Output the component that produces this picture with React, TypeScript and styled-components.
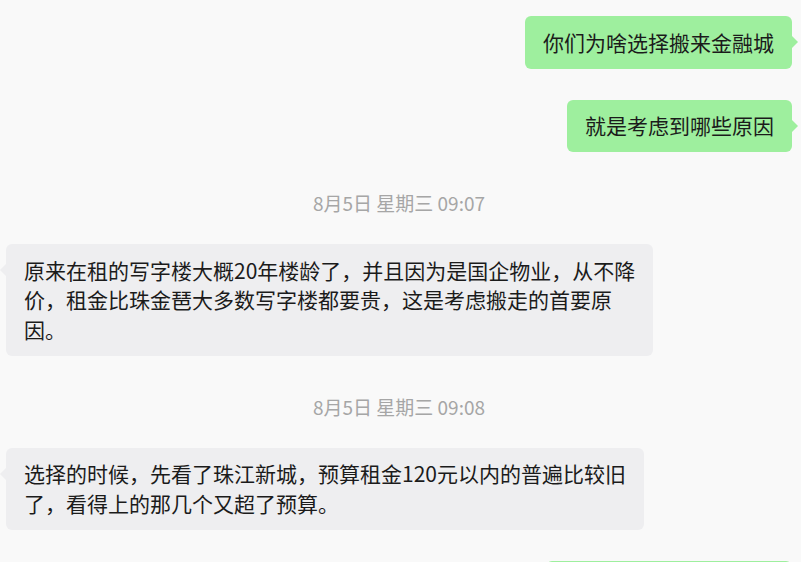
import React from "react";
import styled, { createGlobalStyle, css } from "styled-components";

const GlobalStyle = createGlobalStyle`
  html, body {
    margin: 0;
    padding: 0;
    background: #f9f9f9;
  }
  body {
    font-family: "Noto Sans CJK SC", "Noto Sans", sans-serif;
    overflow: hidden;
  }
`;

const Chat = styled.div`
  display: flex;
  flex-direction: column;
  gap: 31px;
  padding: 16px 9px 0 6px;
  box-sizing: border-box;
  width: 801px;
`;

const Row = styled.div<{ $mine?: boolean }>`
  display: flex;
  justify-content: ${(p) => (p.$mine ? "flex-end" : "flex-start")};
`;

const Bubble = styled.div<{ $mine?: boolean }>`
  position: relative;
  box-sizing: border-box;
  width: max-content;
  max-width: 649px;
  padding: 11.5px 18px;
  border-radius: 6px;
  font-size: 21px;
  line-height: 29.5px;
  color: #1b1b1b;
  background: ${(p) => (p.$mine ? "#9eef9e" : "#eeeef0")};

  &::after {
    content: "";
    position: absolute;
    top: 20px;
    width: 0;
    height: 0;
    border-top: 6.5px solid transparent;
    border-bottom: 6.5px solid transparent;
    ${(p) =>
      p.$mine
        ? css`
            right: -6px;
            border-left: 6px solid #9eef9e;
          `
        : css`
            left: -6px;
            border-right: 6px solid #eeeef0;
          `}
  }
`;

const Line = styled.span`
  display: block;
  white-space: nowrap;
`;

const Timestamp = styled.div`
  text-align: center;
  font-size: 19px;
  line-height: 20px;
  padding-top: 10px;
  color: #a6a6a6;
`;

type Item =
  | { kind: "msg"; mine: boolean; lines: string[] }
  | { kind: "time"; text: string };

const items: Item[] = [
  { kind: "msg", mine: true, lines: ["你们为啥选择搬来金融城"] },
  { kind: "msg", mine: true, lines: ["就是考虑到哪些原因"] },
  { kind: "time", text: "8月5日 星期三 09:07" },
  {
    kind: "msg",
    mine: false,
    lines: [
      "原来在租的写字楼大概20年楼龄了，并且因为是国企物业，从不降",
      "价，租金比珠金琶大多数写字楼都要贵，这是考虑搬走的首要原",
      "因。",
    ],
  },
  { kind: "time", text: "8月5日 星期三 09:08" },
  {
    kind: "msg",
    mine: false,
    lines: [
      "选择的时候，先看了珠江新城，预算租金120元以内的普遍比较旧",
      "了，看得上的那几个又超了预算。",
    ],
  },
  { kind: "msg", mine: true, lines: ["所以最后选择了金融城"] },
];

export default function App() {
  return (
    <>
      <GlobalStyle />
      <Chat>
        {items.map((it, i) =>
          it.kind === "time" ? (
            <Timestamp key={i}>{it.text}</Timestamp>
          ) : (
            <Row key={i} $mine={it.mine}>
              <Bubble $mine={it.mine}>
                {it.lines.map((l, j) => (
                  <Line key={j}>{l}</Line>
                ))}
              </Bubble>
            </Row>
          )
        )}
      </Chat>
    </>
  );
}
